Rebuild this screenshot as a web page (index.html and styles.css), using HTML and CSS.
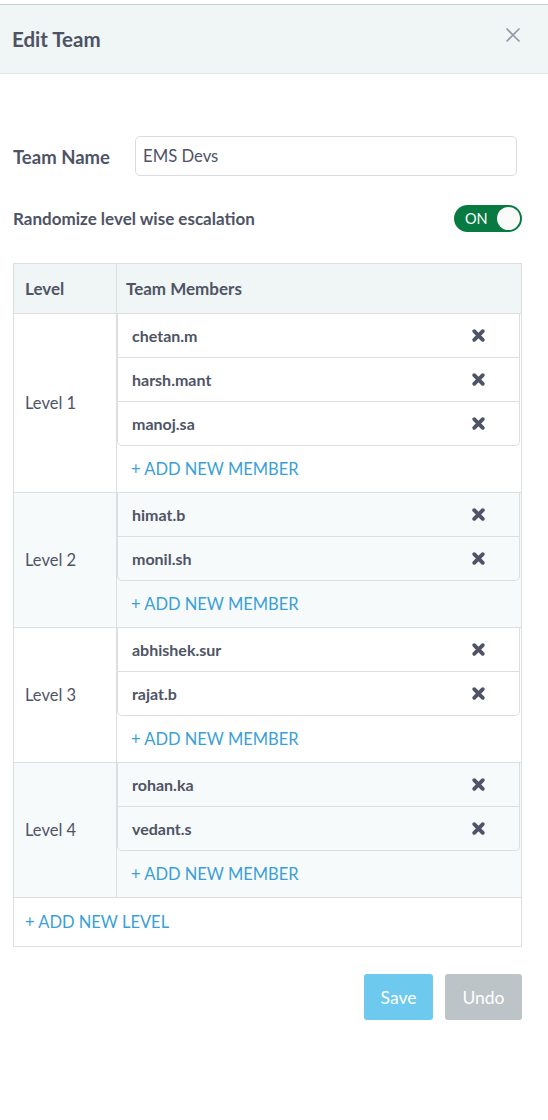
FILE: index.html
```html
<!DOCTYPE html>
<html>
<head>
<meta charset="utf-8">
<link rel="stylesheet" href="styles.css">
</head>
<body>
<div class="modal">
  <div class="modal-header">
    <h1 class="title">Edit Team</h1>
    <svg class="close" width="16" height="16" viewBox="0 0 16 16"><path d="M1.5 1.5L14.5 14.5M14.5 1.5L1.5 14.5" stroke="#8e9ba5" stroke-width="1.6" fill="none"/></svg>
  </div>
  <div class="modal-body">
    <div class="field-row">
      <label class="field-label">Team Name</label>
      <div class="input">EMS Devs</div>
    </div>
    <div class="toggle-row">
      <span class="toggle-label">Randomize level wise escalation</span>
      <span class="toggle"><span class="toggle-text">ON</span><span class="knob"></span></span>
    </div>
    <table class="levels">
      <thead>
        <tr><th class="col-level">Level</th><th>Team Members</th></tr>
      </thead>
      <tbody>
        <tr>
          <td class="level">Level 1</td>
          <td class="members">
            <div class="list">
              <div class="item"><span>chetan.m</span><svg class="x" viewBox="0 0 14 14"><path d="M3 3L11 11M11 3L3 11"/></svg></div>
              <div class="item"><span>harsh.mant</span><svg class="x" viewBox="0 0 14 14"><path d="M3 3L11 11M11 3L3 11"/></svg></div>
              <div class="item"><span>manoj.sa</span><svg class="x" viewBox="0 0 14 14"><path d="M3 3L11 11M11 3L3 11"/></svg></div>
            </div>
            <div class="add-member">+ ADD NEW MEMBER</div>
          </td>
        </tr>
        <tr class="striped">
          <td class="level">Level 2</td>
          <td class="members">
            <div class="list">
              <div class="item"><span>himat.b</span><svg class="x" viewBox="0 0 14 14"><path d="M3 3L11 11M11 3L3 11"/></svg></div>
              <div class="item"><span>monil.sh</span><svg class="x" viewBox="0 0 14 14"><path d="M3 3L11 11M11 3L3 11"/></svg></div>
            </div>
            <div class="add-member">+ ADD NEW MEMBER</div>
          </td>
        </tr>
        <tr>
          <td class="level">Level 3</td>
          <td class="members">
            <div class="list">
              <div class="item"><span>abhishek.sur</span><svg class="x" viewBox="0 0 14 14"><path d="M3 3L11 11M11 3L3 11"/></svg></div>
              <div class="item"><span>rajat.b</span><svg class="x" viewBox="0 0 14 14"><path d="M3 3L11 11M11 3L3 11"/></svg></div>
            </div>
            <div class="add-member">+ ADD NEW MEMBER</div>
          </td>
        </tr>
        <tr class="striped">
          <td class="level">Level 4</td>
          <td class="members">
            <div class="list">
              <div class="item"><span>rohan.ka</span><svg class="x" viewBox="0 0 14 14"><path d="M3 3L11 11M11 3L3 11"/></svg></div>
              <div class="item"><span>vedant.s</span><svg class="x" viewBox="0 0 14 14"><path d="M3 3L11 11M11 3L3 11"/></svg></div>
            </div>
            <div class="add-member">+ ADD NEW MEMBER</div>
          </td>
        </tr>
        <tr>
          <td class="add-level" colspan="2">+ ADD NEW LEVEL</td>
        </tr>
      </tbody>
    </table>
    <div class="actions">
      <button class="btn btn-save">Save</button>
      <button class="btn btn-undo">Undo</button>
    </div>
  </div>
</div>
</body>
</html>
```

FILE: styles.css
```css
* { box-sizing: border-box; }
html, body { margin: 0; padding: 0; background: #fff; }
body {
  font-family: Lato, "Open Sans", sans-serif;
  color: #4e5465;
}
.modal {
  margin-top: 4px;
  border-top: 1px solid #c9cccf;
}
.modal-header {
  height: 69px;
  background: #f0f5f5;
  border-bottom: 1px solid #e2e8e8;
  display: flex;
  align-items: center;
  justify-content: space-between;
  padding: 0 27px 0 12px;
}
.title {
  margin: 0;
  font-size: 20.5px;
  font-weight: bold;
  color: #4d5364;
}
.close { display: block; margin-top: -8px; }
.modal-body {
  padding: 62px 26px 0 13px;
}
.field-row {
  display: flex;
  align-items: center;
  padding-right: 5px;
}
.field-label {
  width: 122px;
  font-size: 18.5px;
  font-weight: bold;
  padding-top: 2px;
}
.input {
  flex: 1;
  height: 40px;
  border: 1px solid #d9dcde;
  border-radius: 5px;
  padding: 0 7px;
  font-size: 16.7px;
  line-height: 38px;
  color: #4e5465;
}
.toggle-row {
  margin-top: 29px;
  display: flex;
  align-items: center;
  justify-content: space-between;
}
.toggle-label {
  font-size: 17px;
  font-weight: bold;
}
.toggle {
  width: 68px;
  height: 27px;
  border-radius: 14px;
  background: #077a41;
  display: flex;
  align-items: center;
  justify-content: space-between;
  padding: 0 2px 0 11px;
}
.toggle-text {
  color: #fff;
  font-size: 14.5px;
}
.knob {
  width: 23px;
  height: 23px;
  border-radius: 50%;
  background: #fafafa;
}
.levels {
  margin-top: 31px;
  width: 509px;
  border-collapse: collapse;
  border: 1px solid #dcdfe1;
}
.levels th {
  height: 50px;
  background: #f0f5f5;
  border: 1px solid #dcdfe1;
  text-align: left;
  font-size: 17px;
  font-weight: bold;
  padding: 0 10px 0 9px;
  color: #4f5566;
}
.levels th.col-level { width: 103px; padding-left: 11px; }
.levels td {
  border: 1px solid #dcdfe1;
  padding: 0;
}
.levels tr.striped td { background: #f7fafb; }
.levels td.level {
  font-size: 16.5px;
  padding-left: 11px;
  vertical-align: middle;
}
.levels td.members { padding-right: 1px; }
.list {
  border: 1px solid #dcdfe1;
  border-top: none;
  border-radius: 0 0 5px 5px;
}
.item {
  height: 44px;
  display: flex;
  align-items: center;
  justify-content: space-between;
  padding: 0 33px 0 14px;
  font-size: 16px;
  font-weight: bold;
  border-top: 1px solid #dcdfe1;
}
.item:first-child { border-top: none; height: 43px; }
.x {
  width: 15px;
  height: 15px;
}
.x path {
  stroke: #4e5465;
  stroke-width: 3.6;
  stroke-linecap: round;
  fill: none;
}
.add-member {
  height: 46px;
  line-height: 46px;
  padding-left: 14px;
  font-size: 16.5px;
  color: #3a9fd8;
}
.levels td.add-level {
  height: 49px;
  padding-left: 11px;
  font-size: 16.5px;
  color: #3a9fd8;
}
.actions {
  margin-top: 27px;
  display: flex;
  justify-content: flex-end;
  gap: 12px;
}
.btn {
  height: 46px;
  border: none;
  border-radius: 3px;
  color: #fff;
  font-family: Lato, "Open Sans", sans-serif;
  font-size: 17.5px;
  padding: 0 10px;
}
.btn-save { background: #6dcaee; width: 69px; }
.btn-undo { background: #bcc4c7; width: 77px; }
```
